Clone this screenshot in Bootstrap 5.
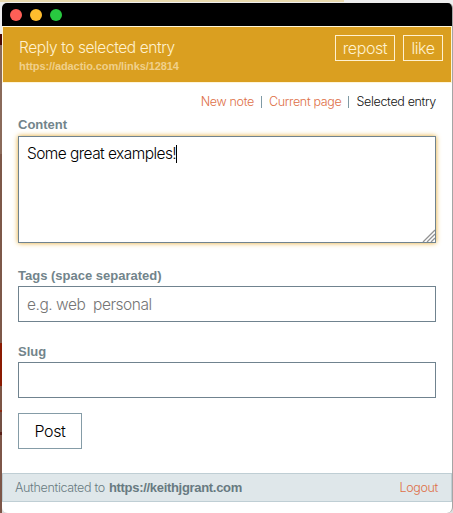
<!DOCTYPE html>
<html lang="en">
<head>
<meta charset="utf-8">
<title>Reply to selected entry</title>
<link rel="stylesheet" href="https://cdn.jsdelivr.net/npm/bootstrap@5.3.0/dist/css/bootstrap.min.css">
<style>
body{font-family:Inter,"Liberation Sans",sans-serif;font-weight:300;font-size:12.5px;letter-spacing:-.33px;line-height:16px;color:#111;height:513px;overflow:hidden;padding:3px 0 0 2px;
background:linear-gradient(#e8d9ad,#e8d9ad) 0 0/344px 2px no-repeat,linear-gradient(#eee,#eee) 0 0/100% 34px no-repeat,linear-gradient(#4a0804 0 11px,#8a6a5a 11px 120px,#7d5849 120px 309px,#8b1b02 309px 352px,#7c5545 352px 376px,#8c2a12 376px 378px,#735044 378px 398px,#5a2018 398px 401px,#7d5648 401px) 0 34px/2px 479px no-repeat,#ddd}
.window{width:451px;height:510px;border-right:1px solid #a5a5a5;border-radius:5px 5px 6px 6px;background:#fff;overflow:hidden}
.titlebar{height:23px;background:#000;padding-left:8px;gap:8px}
.dot{width:12px;height:12px;border-radius:50%}
.dot-close{background:#ff5f57}.dot-min{background:#ffbd2e}.dot-max{background:#28c940}
.masthead{height:57px;background:#da9f20;border:1px solid #fff5d8;padding:8px 8px 0 16px;color:#fff1cf}
.masthead h1{font-size:15.5px;font-weight:300;line-height:20px;letter-spacing:-.41px;margin:3px 0 0}
.source{font:700 11px/14px "Liberation Sans",sans-serif;letter-spacing:-.09px;color:#f0d08a;margin-top:1px}
.masthead .btn{border:1px solid #fff1cf;border-radius:0;color:#fff1cf;font-size:16px;font-weight:300;line-height:24px;height:26px;padding:0;letter-spacing:-.4px}
.btn-repost{width:60px}.btn-like{width:40px}
.compose{padding:0 16px}
.modes{padding:11px 0 0;gap:7px;height:34px}
.modes a,.foot a{color:#de7048;text-decoration:none}
.modes i{width:1px;height:12px;background:#7f9aa5;margin-top:2px}
.field-label{font:700 13px/16px "Liberation Sans",sans-serif;letter-spacing:0;color:#72848b;margin:0 0 3px;display:block}
.tags-label{margin-top:25px;margin-bottom:2px}
.slug-label{margin-top:22px;margin-bottom:2px}
.form-control{border:1px solid #70838f;border-radius:0;font-size:15.5px;font-weight:300;line-height:20px;letter-spacing:-.47px;padding:7px 8px;color:#000}
.form-control::placeholder{color:#757575}
input.form-control{height:36px}
.entry{height:107px;padding:7px 8px;letter-spacing:-.56px;box-shadow:0 0 5px #e5a82a;position:relative}
.caret{display:inline-block;width:1px;height:18px;background:#000;vertical-align:-4px}
.grip{position:absolute;right:0;bottom:0}
.btn-post{width:64px;height:36px;border:1px solid #859ca7;border-radius:0;font-size:16px;font-weight:300;letter-spacing:-.4px;line-height:34px;padding:0;color:#000;margin-top:15px;display:block}
.foot{height:29px;border:1px solid #bfced4;background:#dfe7ea;color:#687a81;padding:0 13px 0 12px;margin-top:24px}
.foot b{font:700 13px "Liberation Sans",sans-serif;letter-spacing:-.31px;margin-left:1px}
</style>
</head>
<body>
<main class="window d-flex flex-column">
<div class="titlebar d-flex align-items-center flex-shrink-0"><span class="dot dot-close"></span><span class="dot dot-min"></span><span class="dot dot-max"></span></div>
<header class="masthead d-flex justify-content-between flex-shrink-0">
<div><h1>Reply to selected entry</h1><div class="source">https://adactio.com/links/12814</div></div>
<div class="d-flex gap-2"><button class="btn btn-repost">repost</button><button class="btn btn-like">like</button></div>
</header>
<form class="compose flex-shrink-0">
<nav class="modes d-flex justify-content-end"><a href="#">New note</a><i></i><a href="#">Current page</a><i></i><span>Selected entry</span></nav>
<label class="field-label">Content</label>
<div class="form-control entry" role="textbox">Some great examples!<span class="caret"></span>
<svg class="grip" width="13" height="13" viewBox="0 0 13 13" fill="none" stroke="#929292" stroke-width="1.3"><path d="M1 13 13 1M5 13 13 5M9 13 13 9"/></svg></div>
<label class="field-label tags-label" for="tags">Tags (space separated)</label>
<input class="form-control" id="tags" placeholder="e.g. web&nbsp; personal">
<label class="field-label slug-label" for="slug">Slug</label>
<input class="form-control" id="slug">
<button class="btn btn-post" type="button">Post</button>
</form>
<footer class="foot d-flex align-items-center justify-content-between flex-shrink-0"><span>Authenticated to <b>https://keithjgrant.com</b></span><a href="#">Logout</a></footer>
</main>
<script src="https://cdn.jsdelivr.net/npm/bootstrap@5.3.0/dist/js/bootstrap.bundle.min.js"></script>
</body>
</html>
